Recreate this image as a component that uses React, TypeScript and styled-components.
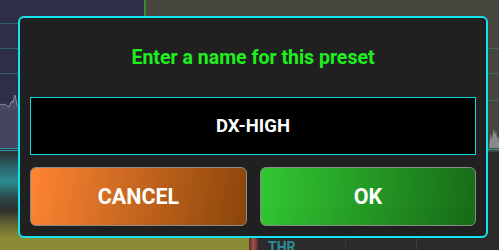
import React, { FC, useState } from 'react';
import styled, { createGlobalStyle } from 'styled-components';

const GlobalStyle = createGlobalStyle`
  html, body {
    margin: 0;
    padding: 0;
    background: #2b2b2b;
    font-family: 'Roboto', 'Liberation Sans', sans-serif;
  }
  * {
    box-sizing: border-box;
  }
`;

// horizontal 1px rules at the given offsets, as gradient stops
const rules = (colour: string, ys: number[]) =>
  `linear-gradient(180deg, ${ys
    .map((y) => `transparent ${y}px, ${colour} ${y}px, ${colour} ${y + 1}px, transparent ${y + 1}px`)
    .join(', ')})`;

const Screen = styled.div`
  position: relative;
  width: 499px;
  height: 250px;
  overflow: hidden;
  display: grid;
  grid-template-rows: 152px 1fr;
`;

const TopRow = styled.div`
  display: grid;
  grid-template-columns: 144px 2px 1fr;
`;

const BottomRow = styled.div`
  display: grid;
  grid-template-columns: 249px 1fr;
`;

const ScopePanel = styled.div`
  display: flex;
  flex-direction: column;
  padding-top: 92px;
  background: ${rules('#2b9a9e', [148, 150])}, ${rules('#2f5f66', [23, 48, 73])},
    linear-gradient(180deg, #2e2f46 0px, #2e2f46 106px, #46455f 106px, #46455f 148px, #2e2f46 148px);
`;

const Divider = styled.div`
  background: #358a2a;
`;

const GainPanel = styled.div`
  display: flex;
  flex-direction: column;
  padding-top: 126px;
  background: ${rules('#2b9a9e', [149])}, ${rules('#3f6658', [48, 73, 100])}, #46463e;
`;

const Wave = styled.svg<{ h: number }>`
  display: block;
  width: 100%;
  height: ${(p) => p.h}px;
`;

const MeterColumn = styled.div`
  background: linear-gradient(
    180deg,
    #2a3132 0px,
    #2b6e72 18px,
    #2a8b8f 30px,
    #2c4a4c 45px,
    #2f2f2d 58px,
    #6a6a32 74px,
    #8a8a34 86px,
    #8c8c36 100px
  );
`;

const ControlPanel = styled.div`
  background: linear-gradient(
      90deg,
      transparent 96px,
      #3b3b3b 96px,
      #3b3b3b 97px,
      transparent 97px,
      transparent 167px,
      #3b3b3b 167px,
      #3b3b3b 168px,
      transparent 168px
    ),
    #2b2b2b;
  display: flex;
  align-items: flex-end;
  gap: 10px;
`;

const RedBar = styled.div`
  width: 9px;
  height: 14px;
  background: linear-gradient(90deg, #5a2a2a, #a05050, #5a2a2a);
`;

const ThrLabel = styled.span`
  color: #2a8f95;
  font-weight: 700;
  font-size: 14px;
  line-height: 12px;
  margin-bottom: -3px;
`;

const Dialog = styled.div`
  position: absolute;
  left: 18px;
  top: 16px;
  width: 470px;
  height: 222px;
  background: #202020;
  border: 2px solid #12e4ee;
  border-radius: 6px;
  padding: 0 10px 10px;
  display: flex;
  flex-direction: column;
`;

const Title = styled.div`
  height: 80px;
  display: flex;
  align-items: center;
  justify-content: center;
  color: #1ef01e;
  font-weight: 700;
  font-size: 19.5px;
`;

const NameInput = styled.input`
  height: 58px;
  width: 100%;
  background: #000;
  border: 1px solid #12d8e2;
  outline: none;
  color: #fff;
  font-family: 'Roboto', 'Liberation Sans', sans-serif;
  font-weight: 700;
  font-size: 18.5px;
  text-align: center;
  padding: 0;
`;

const Buttons = styled.div`
  margin-top: 12px;
  display: grid;
  grid-template-columns: 217px 216px;
  gap: 13px;
`;

const Button = styled.button<{ from: string; to: string }>`
  height: 59px;
  border: 1.5px solid #8a8a8a;
  border-radius: 6px;
  background: linear-gradient(100deg, ${(p) => p.from}, ${(p) => p.to});
  color: #fff;
  font-family: 'Roboto', 'Liberation Sans', sans-serif;
  font-weight: 700;
  font-size: 21.5px;
  padding: 0;
  cursor: pointer;
`;

const App: FC = () => {
  const [name, setName] = useState('DX-HIGH');

  return (
    <>
      <GlobalStyle />
      <Screen>
        <TopRow>
          <ScopePanel>
            <Wave h={18} viewBox="0 0 144 18" preserveAspectRatio="none">
              <path
                d="M0 12 L3 13 L5 12 L7 14 L9 15 L10 12 L12 9 L13 11 L14 5 L15 3 L16 8 L17 14 L144 14 L144 18 L0 18 Z"
                fill="#4a4862"
              />
              <path
                d="M0 12 L3 13 L5 12 L7 14 L9 15 L10 12 L12 9 L13 11 L14 5 L15 3 L16 8 L17 14"
                fill="none"
                stroke="#9a9aa6"
                strokeWidth="0.8"
              />
            </Wave>
          </ScopePanel>
          <Divider />
          <GainPanel>
            <Wave h={22} viewBox="0 0 353 22" preserveAspectRatio="none">
              <path
                d="M343 22 L344 12 L345 8 L346 14 L347 6 L348 3 L349 9 L350 5 L351 12 L352 10 L353 16 L353 22 Z"
                fill="#8a8a8e"
              />
            </Wave>
          </GainPanel>
        </TopRow>
        <BottomRow>
          <MeterColumn />
          <ControlPanel>
            <RedBar />
            <ThrLabel>THR</ThrLabel>
          </ControlPanel>
        </BottomRow>

        <Dialog>
          <Title>Enter a name for this preset</Title>
          <NameInput value={name} onChange={(e) => setName(e.target.value)} />
          <Buttons>
            <Button from="#ff8533" to="#8a4509">
              CANCEL
            </Button>
            <Button from="#32c832" to="#176a17">
              OK
            </Button>
          </Buttons>
        </Dialog>
      </Screen>
    </>
  );
};

export default App;
